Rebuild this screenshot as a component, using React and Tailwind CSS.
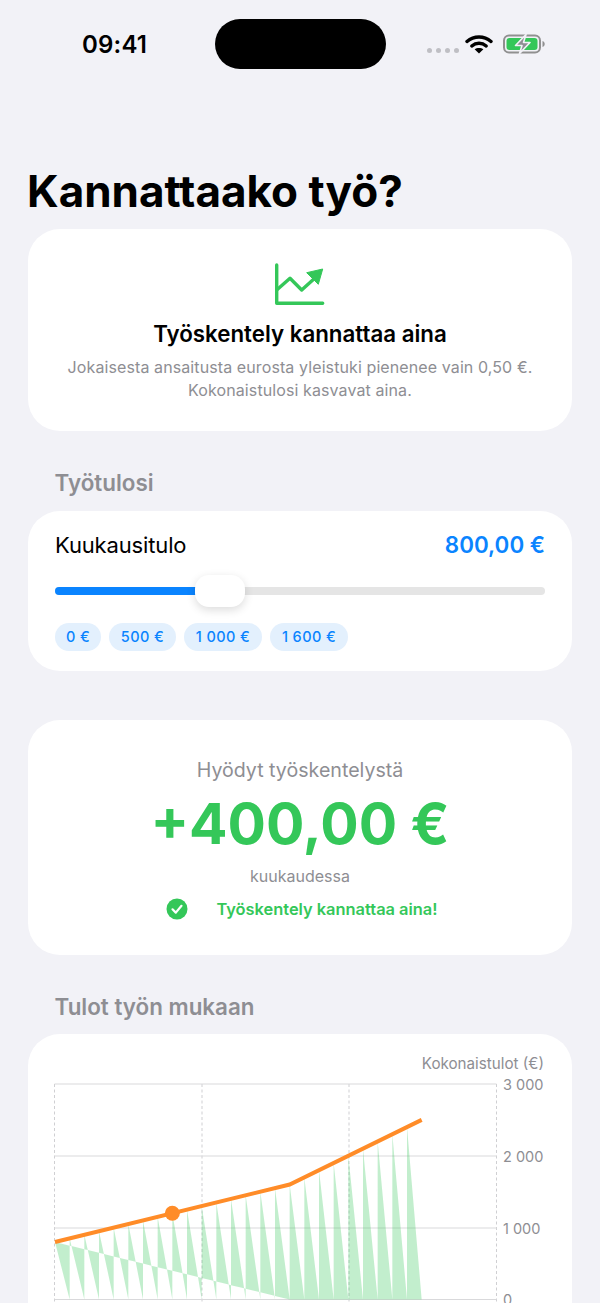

const X = (v) => 55 + (v / 3000) * 440;
const Y = (v) => 1299.5 - (v / 3000) * 215.5;
const total = (v) => (v <= 1600 ? 800 + v * 0.5 : 1600 + (v - 1600));
const low = (v) => Math.max(0, 800 - v * 0.5);

function buildArea() {
  let d = "";
  for (let i = 0; i < 25; i++) {
    const a = i * 100;
    const b = a + 100;
    const t = total(a);
    const la = low(a);
    const lb = low(b);
    if (la > 0) {
      const s = (t - la) / (t + lb - la);
      const hx = a + 100 * s;
      const hv = t * (1 - s);
      d += `M${X(a)} ${Y(t)}L${X(a)} ${Y(la)}L${X(hx)} ${Y(hv)}Z`;
      d += `M${X(hx)} ${Y(hv)}L${X(b)} ${Y(lb)}L${X(b)} ${Y(0)}Z`;
    } else {
      d += `M${X(a)} ${Y(t)}L${X(a)} ${Y(0)}L${X(b)} ${Y(0)}Z`;
    }
  }
  return d;
}

function StatusBar() {
  return (
    <div className="flex items-center h-[50px] mt-[19px] pl-[82px]">
      <span className="w-[133px] text-[24px] font-semibold text-black leading-none mt-[1px] tracking-[0.2px]">09:41</span>
      <div className="w-[171px] h-[50px] rounded-full bg-black" />
      <div className="flex items-center ml-[41px] gap-[4px] mt-[12px]">
        <span className="w-[5px] h-[5px] rounded-full bg-[#bfbfc4]" />
        <span className="w-[5px] h-[5px] rounded-full bg-[#bfbfc4]" />
        <span className="w-[5px] h-[5px] rounded-full bg-[#bfbfc4]" />
        <span className="w-[5px] h-[5px] rounded-full bg-[#bfbfc4]" />
      </div>
      <svg width="28" height="20" viewBox="0 0 28 20" className="ml-[12px] -mt-[1px] -translate-x-[6px]">
        <path d="M2 7.5C9 1.5 19 1.5 26 7.5" fill="none" stroke="#000" strokeWidth="3.4" strokeLinecap="round" />
        <path d="M6.8 12C11 8.4 17 8.4 21.2 12" fill="none" stroke="#000" strokeWidth="3.4" strokeLinecap="round" />
        <path d="M14 19.5L9.6 15.3C12 13.4 16 13.4 18.4 15.3Z" fill="#000" />
      </svg>
      <svg width="43" height="20" viewBox="0 0 43 20" className="ml-[4px] -mt-[1px]">
        <rect x="1" y="1.5" width="36" height="17" rx="5" fill="none" stroke="#909090" strokeWidth="2" />
        <rect x="3.5" y="4" width="31" height="12" rx="3" fill="#34c759" />
        <path d="M39.5 7v6c1.5-.5 2.2-1.6 2.2-3s-.7-2.5-2.2-3z" fill="#909090" />
        <path d="M23 0.5L12.5 11.5h6.5L16.5 19.5 27 8.5H20.5z" fill="#8e8e93" stroke="#f2f2f7" strokeWidth="1.6" strokeLinejoin="round" />
      </svg>
    </div>
  );
}

function SectionLabel({ children, className }) {
  return <div className={`ml-[54.5px] text-[22.4px] leading-[28px] font-semibold text-[#8e8e93] ${className}`}>{children}</div>;
}

function Chip({ children, className }) {
  return (
    <span className={`h-[28px] flex items-center justify-center rounded-full bg-[#e3f0fd] text-[#0a84ff] text-[14.5px] font-medium tracking-[0.4px] whitespace-nowrap ${className}`}>
      {children}
    </span>
  );
}

function Chart() {
  const gridY = [1084, 1156, 1228, 1299.5];
  const gridX = [54.5, 202, 349, 496.5];
  const labels = ["3 000", "2 000", "1 000", "0"];
  const line = [0, 1600, 2500].map((v) => `${X(v)},${Y(total(v))}`).join(" ");
  return (
    <svg width="544" height="229" viewBox="28 1074 544 229" className="block" style={{ fontFamily: "Inter, sans-serif" }}>
      {gridX.map((x) => (
        <line key={x} x1={x} x2={x} y1="1084" y2="1303" stroke="#cfcfd2" strokeWidth="1" strokeDasharray="3 2.5" />
      ))}
      {gridY.map((y) => (
        <line key={y} x1="54.5" x2="496.5" y1={y} y2={y} stroke="#d9d9db" strokeWidth="1.2" />
      ))}
      <path d={buildArea()} fill="#34c759" fillOpacity="0.3" />
      <polyline points={line} fill="none" stroke="#ff8c28" strokeWidth="4" />
      <circle cx={X(800)} cy={Y(1200)} r="7.5" fill="#ff8c28" />
      {labels.map((l, i) => (
        <text key={l} x="503" y={gridY[i]} dominantBaseline="central" fontSize="14.5" fill="#8e8e93">{l}</text>
      ))}
    </svg>
  );
}

export default function App() {
  return (
    <div className="w-[600px] h-[1303px] overflow-hidden bg-[#f2f2f7] font-['Inter',sans-serif] text-black">
      <StatusBar />
      <h1 className="mt-[97px] ml-[27px] text-[44px] leading-[50px] font-bold">Kannattaako työ?</h1>

      <section className="mt-[13px] mx-[28px] h-[202px] rounded-[32px] bg-white pt-[34px] flex flex-col items-center">
        <svg width="50" height="42" viewBox="0 0 50 42">
          <path d="M1.7 2V40.3H47.7" fill="none" stroke="#34c759" strokeWidth="3.4" strokeLinecap="round" strokeLinejoin="round" />
          <path d="M1.7 27L15 15.3L26.7 27L40 15" fill="none" stroke="#34c759" strokeWidth="3.4" strokeLinejoin="round" />
          <path d="M31.7 9.7L47.7 6L43.3 21.3Z" fill="#34c759" stroke="#34c759" strokeWidth="1" strokeLinejoin="round" />
        </svg>
        <h2 className="mt-[16px] text-[22.3px] leading-[26px] font-semibold">Työskentely kannattaa aina</h2>
        <p className="mt-[9px] text-[16px] leading-[23px] text-[#8e8e93] text-center tracking-[0.1px]">
          Jokaisesta ansaitusta eurosta yleistuki pienenee vain 0,50 €.
          <br />
          Kokonaistulosi kasvavat aina.
        </p>
      </section>

      <SectionLabel className="mt-[38px]">Työtulosi</SectionLabel>

      <section className="mt-[14px] mx-[28px] h-[160px] rounded-[32px] bg-white pt-[20px] px-[27px]">
        <div className="flex items-center justify-between h-[28px]">
          <span className="text-[22px] tracking-[-0.15px]">Kuukausitulo</span>
          <span className="text-[22.4px] font-semibold text-[#0a84ff]">800,00 €</span>
        </div>
        <div className="relative mt-[16px] h-[32px] flex items-center">
          <div className="w-full h-[8px] rounded-full bg-[#e5e5e5] overflow-hidden">
            <div className="h-full w-[142px] bg-[#0a84ff]" />
          </div>
          <div className="absolute left-[140px] top-0 w-[50px] h-[32px] rounded-[14px] bg-white shadow-[0_3px_10px_rgba(0,0,0,0.14)]" />
        </div>
        <div className="mt-[16px] flex gap-[8px]">
          <Chip className="w-[46px]">0 €</Chip>
          <Chip className="w-[67px]">500 €</Chip>
          <Chip className="w-[78px]">1 000 €</Chip>
          <Chip className="w-[78px]">1 600 €</Chip>
        </div>
      </section>

      <section className="mt-[49px] mx-[28px] h-[235px] rounded-[32px] bg-white pt-[37px] flex flex-col items-center">
        <div className="text-[19.6px] leading-[26px] text-[#8e8e93]">Hyödyt työskentelystä</div>
        <div className="mt-[9px] text-[57px] leading-[64px] font-bold text-[#34c759]">+400,00 €</div>
        <div className="mt-[9px] text-[16px] leading-[22px] text-[#8e8e93]">kuukaudessa</div>
        <div className="mt-[11px] h-[22px] flex items-center gap-[28px] pl-[4px]">
          <svg width="22" height="22" viewBox="0 0 22 22">
            <circle cx="11" cy="11" r="10.5" fill="#34c759" />
            <path d="M6.5 11.3L9.8 14.6L15.5 7.8" fill="none" stroke="#fff" strokeWidth="2.2" strokeLinecap="round" strokeLinejoin="round" />
          </svg>
          <span className="text-[16.4px] font-semibold text-[#34c759]">Työskentely kannattaa aina!</span>
        </div>
      </section>

      <SectionLabel className="mt-[38px]">Tulot työn mukaan</SectionLabel>

      <section className="mt-[13px] mx-[28px] rounded-t-[32px] bg-white pt-[20px] h-[300px]">
        <div className="pr-[28px] text-right text-[15.2px] leading-[20px] text-[#8e8e93]">Kokonaistulot (€)</div>
        <Chart />
      </section>
    </div>
  );
}
